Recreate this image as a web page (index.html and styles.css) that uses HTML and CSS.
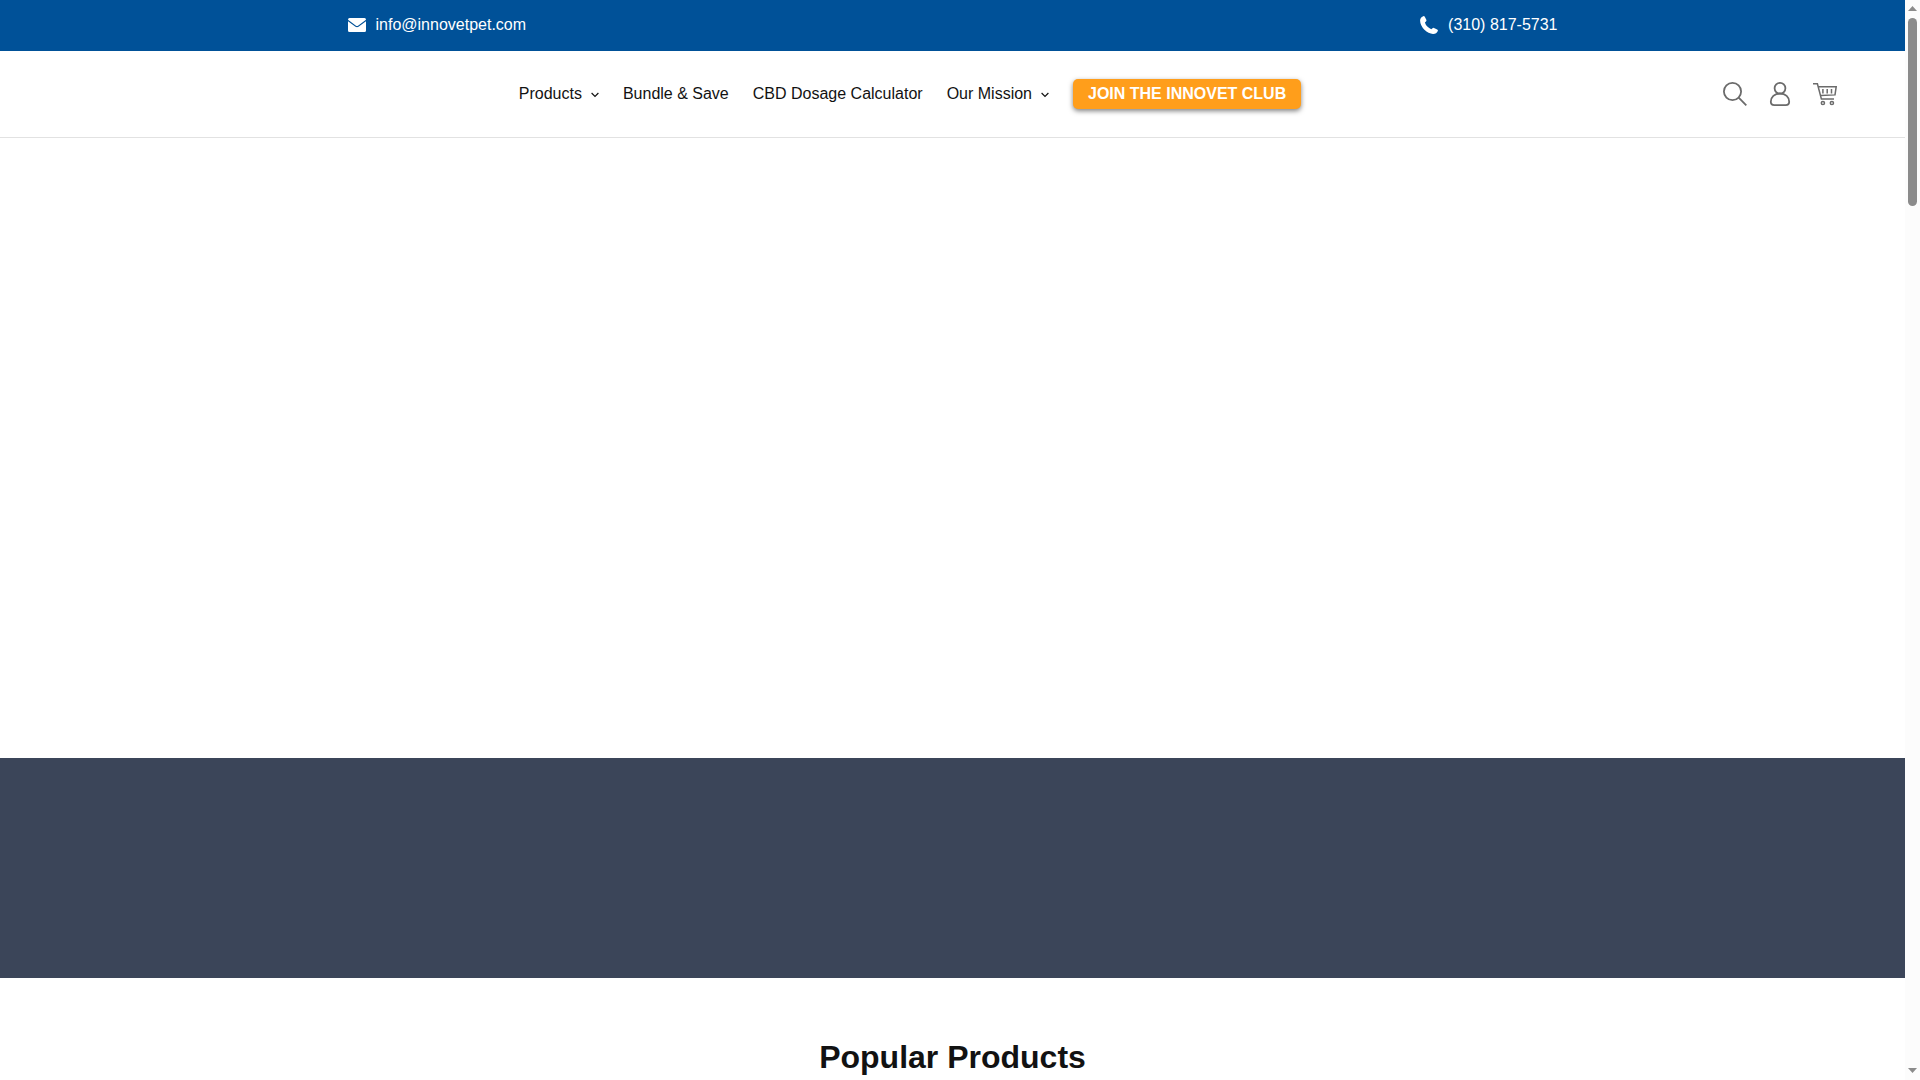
FILE: index.html
```html
<!DOCTYPE html>
<html lang="en">
<head>
<meta charset="utf-8">
<meta name="viewport" content="width=device-width, initial-scale=1">
<title>Innovet Pet</title>
<link rel="stylesheet" href="styles.css">
</head>
<body>
<div class="viewport">
  <div class="page">
    <div class="topbar">
      <div class="topbar-inner">
        <a class="contact" href="mailto:info@innovetpet.com">
          <svg class="contact-icon" viewBox="0 0 18 18" aria-hidden="true"><path fill="currentColor" d="M1.500 2h15Q18 2 18 3.800L10 9.700Q9 10.300 8 9.700L0 3.800Q0 2 1.500 2ZM0 5.300l7.500 5.500q1.500.9 3 0L18 5.300v9.200q0 1.500-1.500 1.500h-15Q0 16 0 14.500Z"/></svg>
          <span>info@innovetpet.com</span>
        </a>
        <a class="contact" href="tel:+13108175731">
          <svg class="contact-icon" viewBox="0 0 18 18" aria-hidden="true"><path fill="currentColor" d="M3.200.2Q4.200-.2 4.800.8L6.300 3.800Q6.700 4.700 6 5.400L4.900 6.500Q5.500 8.700 7.300 10.500T11.300 13.300L12.500 12.200Q13.200 11.600 14 12L17.200 13.500Q18.200 14 17.800 15Q16.500 18 13 17.900Q8.500 17.700 4.400 13.700T.1 4.800Q0 1.500 3.200.2Z"/></svg>
          <span>(310) 817-5731</span>
        </a>
      </div>
    </div>
    <header class="header">
      <nav class="nav" aria-label="Main">
        <button class="nav-item" type="button">Products <svg class="chevron" viewBox="0 0 8 6" aria-hidden="true"><path d="M.6 1 4 4.400 7.400 1"/></svg></button>
        <a class="nav-item" href="#bundle">Bundle &amp; Save</a>
        <a class="nav-item" href="#calculator">CBD Dosage Calculator</a>
        <button class="nav-item" type="button">Our Mission <svg class="chevron" viewBox="0 0 8 6" aria-hidden="true"><path d="M.6 1 4 4.400 7.400 1"/></svg></button>
        <a class="club" href="#club">JOIN THE INNOVET CLUB</a>
      </nav>
      <div class="tools">
        <a class="tool" href="#search" aria-label="Search"><svg viewBox="0 0 24 24"><circle cx="9.500" cy="9.500" r="8.600"/><path d="m15.700 15.700 7.600 7.600"/></svg></a>
        <a class="tool" href="#account" aria-label="Account"><svg viewBox="0 0 24 24"><circle cx="12" cy="6.300" r="5.400"/><path d="M12 11.500C6.500 11.500 2.800 15.200 2.800 19.800Q2.800 23.100 6.300 23.100H17.700Q21.200 23.100 21.200 19.800C21.200 15.200 17.500 11.500 12 11.500Z"/></svg></a>
        <a class="tool cart" href="#cart" aria-label="Cart"><svg viewBox="0 0 24 24"><path d="M0 1.700H4.400L8.400 17H21M5.200 4.700H23.200L22 12.900L7.400 13.600M9.900 7v4.500M14.200 7v4.500M18.500 7v4.500"/><circle cx="9.900" cy="21" r="1.600"/><circle cx="18.900" cy="21" r="1.600"/></svg></a>
      </div>
    </header>
    <main>
      <section class="hero" aria-label="Featured"></section>
      <section class="band" aria-label="Highlights"></section>
      <section class="products">
        <h2>Popular Products</h2>
      </section>
    </main>
  </div>
  <div class="scrollbar" aria-hidden="true">
    <svg class="arrow" viewBox="0 0 9 5"><path d="M4.500 0 9 5H0Z"/></svg>
    <div class="track"><div class="thumb"></div></div>
    <svg class="arrow" viewBox="0 0 9 5"><path d="M0 0H9L4.500 5Z"/></svg>
  </div>
</div>
</body>
</html>
```
FILE: styles.css
```css
* {
  box-sizing: border-box;
}

body {
  margin: 0;
  background: #fff;
  color: #121212;
  font: 16px/24px "Liberation Sans", Arial, sans-serif;
}

a {
  color: inherit;
  text-decoration: none;
}

.viewport {
  display: flex;
  height: 100vh;
  overflow: hidden;
}

.page {
  flex: 1;
  min-width: 0;
  overflow: hidden;
}

.topbar {
  padding: 13px 24px 14px;
  background: #005198;
  color: #fff;
}

.topbar-inner {
  display: flex;
  justify-content: space-between;
  max-width: 1210px;
  margin: 0 auto;
}

.contact {
  display: flex;
  align-items: center;
  gap: 10px;
}

.contact-icon {
  width: 18px;
  height: 18px;
}

.header {
  display: grid;
  grid-template-columns: 1fr auto 1fr;
  align-items: center;
  padding: 28px 68px;
  border-bottom: 1px solid #e2e2e2;
}

.nav {
  grid-column: 2;
  display: flex;
  align-items: center;
  gap: 24px;
  margin-right: 85px;
}

.nav-item {
  display: flex;
  align-items: center;
  gap: 9px;
  padding: 0;
  border: 0;
  background: none;
  color: inherit;
  font: inherit;
}

.chevron {
  width: 8px;
  height: 6px;
  margin-top: 2px;
  fill: none;
  stroke: currentColor;
  stroke-width: 1.2;
}

.club {
  padding: 3px 15px;
  border-radius: 5px;
  background: #ff9e1b;
  box-shadow: 0 2px 5px rgba(0, 0, 0, 0.5);
  color: #fff;
  font-weight: bold;
}

.tools {
  grid-column: 3;
  display: flex;
  justify-content: flex-end;
  gap: 21px;
}

.tool {
  display: flex;
  color: #6b6b6b;
}

.tool svg {
  width: 24px;
  height: 24px;
  fill: none;
  stroke: currentColor;
  stroke-width: 1.8;
}

.tool.cart svg {
  stroke-width: 1.5;
}

.hero {
  height: 620px;
}

.band {
  height: 220px;
  background: #3b4559;
}

.products {
  padding: 60px 24px;
  text-align: center;
}

h2 {
  margin: 0;
  font-size: 32px;
  line-height: 38px;
}

.scrollbar {
  display: flex;
  flex-direction: column;
  align-items: center;
  gap: 7px;
  width: 15px;
  padding: 6px 0 7px;
  background: #fcfcfc;
}

.arrow {
  width: 9px;
  height: 5px;
  fill: #8b8b8b;
}

.track {
  flex: 1;
  width: 9px;
}

.thumb {
  height: 18%;
  border-radius: 5px;
  background: #8b8b8b;
}
```
